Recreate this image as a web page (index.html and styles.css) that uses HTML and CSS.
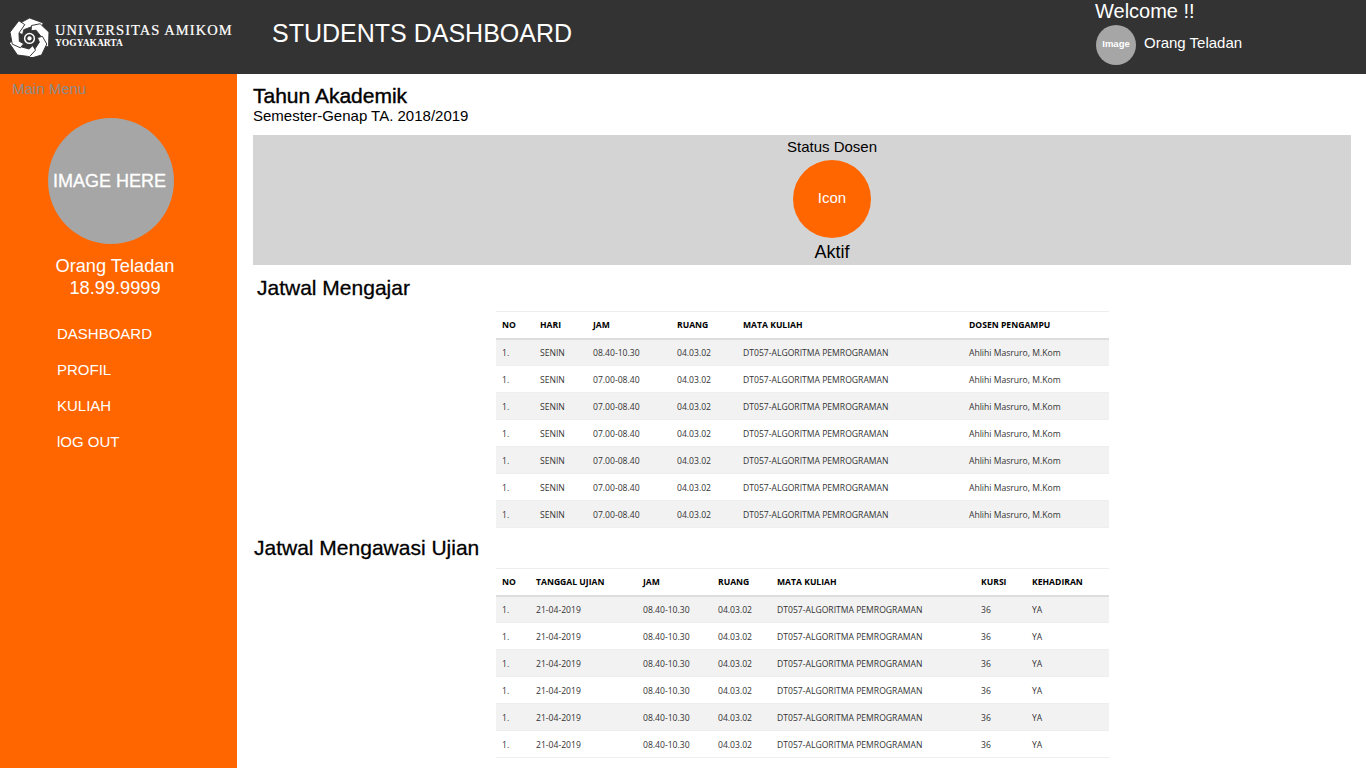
FILE: index.html
```html
<!DOCTYPE html>
<html lang="en">
<head>
    <meta charset="UTF-8">
    <meta name="viewport" content="width=device-width, initial-scale=1.0">
    <title>Students Dashboard</title>
    <link rel="stylesheet" href="styles.css">
</head>
<body>
    <header class="topbar">
        <div class="logo">
            <svg class="logo-mark" viewBox="0 0 40 40" width="39" height="39">
                <g fill="#fff" stroke="#333333" stroke-width="0.9">
                    <path id="blade" d="M20 0 L34 5 L32 12 L22 9 L14 12 L13 17 L8 15 L9 6 Z"/>
                    <use href="#blade" transform="rotate(72 20 21)"/>
                    <use href="#blade" transform="rotate(144 20 21)"/>
                    <use href="#blade" transform="rotate(216 20 21)"/>
                    <use href="#blade" transform="rotate(288 20 21)"/>
                </g>
                <circle cx="20" cy="21" r="5" fill="#333333" stroke="#fff" stroke-width="1.5"/>
                <circle cx="20" cy="21" r="2.2" fill="#fff"/>
            </svg>
            <div class="logo-text">
                <div class="logo-name">UNIVERSITAS AMIKOM</div>
                <div class="logo-city">YOGYAKARTA</div>
            </div>
        </div>
        <div class="app-title">STUDENTS DASHBOARD</div>
        <div class="welcome">
            <div class="welcome-text">Welcome !!</div>
            <div class="welcome-user">
                <div class="avatar-small">Image</div>
                <span class="welcome-name">Orang Teladan</span>
            </div>
        </div>
    </header>

    <div class="page">
        <aside class="sidebar">
            <div class="menu-label">Main Menu</div>
            <div class="avatar-big">IMAGE HERE</div>
            <div class="user-name">Orang Teladan</div>
            <div class="user-id">18.99.9999</div>
            <ul class="side-nav">
                <li><a href="#">DASHBOARD</a></li>
                <li><a href="#">PROFIL</a></li>
                <li><a href="#">KULIAH</a></li>
                <li><a href="#">lOG OUT</a></li>
            </ul>
        </aside>

        <main class="content">
            <h1 class="year-title">Tahun Akademik</h1>
            <p class="semester">Semester-Genap TA. 2018/2019</p>

            <section class="status">
                <div class="status-label">Status Dosen</div>
                <div class="status-icon">Icon</div>
                <div class="status-value">Aktif</div>
            </section>

            <h2 class="section-title teach-title">Jatwal Mengajar</h2>
            <table class="data-table teach-table">
                <thead>
                    <tr><th>NO</th><th>HARI</th><th>JAM</th><th>RUANG</th><th>MATA KULIAH</th><th>DOSEN PENGAMPU</th></tr>
                </thead>
                <tbody>
                    <tr><td>1.</td><td>SENIN</td><td>08.40-10.30</td><td>04.03.02</td><td>DT057-ALGORITMA PEMROGRAMAN</td><td>Ahlihi Masruro, M.Kom</td></tr>
                    <tr><td>1.</td><td>SENIN</td><td>07.00-08.40</td><td>04.03.02</td><td>DT057-ALGORITMA PEMROGRAMAN</td><td>Ahlihi Masruro, M.Kom</td></tr>
                    <tr><td>1.</td><td>SENIN</td><td>07.00-08.40</td><td>04.03.02</td><td>DT057-ALGORITMA PEMROGRAMAN</td><td>Ahlihi Masruro, M.Kom</td></tr>
                    <tr><td>1.</td><td>SENIN</td><td>07.00-08.40</td><td>04.03.02</td><td>DT057-ALGORITMA PEMROGRAMAN</td><td>Ahlihi Masruro, M.Kom</td></tr>
                    <tr><td>1.</td><td>SENIN</td><td>07.00-08.40</td><td>04.03.02</td><td>DT057-ALGORITMA PEMROGRAMAN</td><td>Ahlihi Masruro, M.Kom</td></tr>
                    <tr><td>1.</td><td>SENIN</td><td>07.00-08.40</td><td>04.03.02</td><td>DT057-ALGORITMA PEMROGRAMAN</td><td>Ahlihi Masruro, M.Kom</td></tr>
                    <tr><td>1.</td><td>SENIN</td><td>07.00-08.40</td><td>04.03.02</td><td>DT057-ALGORITMA PEMROGRAMAN</td><td>Ahlihi Masruro, M.Kom</td></tr>
                </tbody>
            </table>

            <h2 class="section-title exam-title">Jatwal Mengawasi Ujian</h2>
            <table class="data-table exam-table">
                <thead>
                    <tr><th>NO</th><th>TANGGAL UJIAN</th><th>JAM</th><th>RUANG</th><th>MATA KULIAH</th><th>KURSI</th><th>KEHADIRAN</th></tr>
                </thead>
                <tbody>
                    <tr><td>1.</td><td>21-04-2019</td><td>08.40-10.30</td><td>04.03.02</td><td>DT057-ALGORITMA PEMROGRAMAN</td><td>36</td><td>YA</td></tr>
                    <tr><td>1.</td><td>21-04-2019</td><td>08.40-10.30</td><td>04.03.02</td><td>DT057-ALGORITMA PEMROGRAMAN</td><td>36</td><td>YA</td></tr>
                    <tr><td>1.</td><td>21-04-2019</td><td>08.40-10.30</td><td>04.03.02</td><td>DT057-ALGORITMA PEMROGRAMAN</td><td>36</td><td>YA</td></tr>
                    <tr><td>1.</td><td>21-04-2019</td><td>08.40-10.30</td><td>04.03.02</td><td>DT057-ALGORITMA PEMROGRAMAN</td><td>36</td><td>YA</td></tr>
                    <tr><td>1.</td><td>21-04-2019</td><td>08.40-10.30</td><td>04.03.02</td><td>DT057-ALGORITMA PEMROGRAMAN</td><td>36</td><td>YA</td></tr>
                    <tr><td>1.</td><td>21-04-2019</td><td>08.40-10.30</td><td>04.03.02</td><td>DT057-ALGORITMA PEMROGRAMAN</td><td>36</td><td>YA</td></tr>
                </tbody>
            </table>
        </main>
    </div>
</body>
</html>
```

FILE: styles.css
```css
html, body {
    height: 768px;
    overflow: hidden;
}

body {
    font-family: "Liberation Sans", Arial, sans-serif;
    margin: 0;
    padding: 0;
    background-color: white;
    color: black;
}

.topbar {
    display: flex;
    height: 74px;
    background-color: #333333;
    color: white;
}

.logo {
    display: flex;
    align-items: center;
    width: 272px;
    padding-left: 10px;
    box-sizing: border-box;
}

.logo-mark {
    flex: 0 0 auto;
}

.logo-text {
    margin-left: 6px;
    margin-bottom: 3px;
    font-family: "Liberation Serif", serif;
}

.logo-name {
    font-size: 14.5px;
    line-height: 15px;
    letter-spacing: 1.05px;
    white-space: nowrap;
    -webkit-text-stroke: 0.2px white;
}

.logo-city {
    font-size: 9.5px;
    line-height: 10px;
    font-weight: bold;
}

.app-title {
    font-size: 25px;
    line-height: 66px;
    flex: 1;
}

.welcome {
    width: 271px;
}

.welcome-text {
    font-size: 20px;
    line-height: 23px;
}

.welcome-user {
    display: flex;
    align-items: center;
    margin-top: 2px;
    margin-left: 1px;
    font-size: 15px;
}

.welcome-name {
    margin-bottom: 6px;
}

.avatar-small {
    width: 40px;
    height: 40px;
    line-height: 38px;
    margin-right: 8px;
    border-radius: 50%;
    background-color: #a6a6a6;
    text-align: center;
    font-size: 9.5px;
    font-weight: bold;
}

.page {
    display: flex;
    height: 694px;
}

.sidebar {
    width: 237px;
    flex: 0 0 auto;
    background-color: #ff6600;
    color: white;
    text-align: center;
}

.menu-label {
    padding: 7px 0 0 12px;
    height: 44px;
    box-sizing: border-box;
    text-align: left;
    font-size: 15px;
    line-height: 16px;
    color: #8c8c8c;
}

.avatar-big {
    width: 126px;
    height: 126px;
    line-height: 126px;
    margin: 0 0 11px 48px;
    border-radius: 50%;
    background-color: #a6a6a6;
    font-size: 18px;
    white-space: nowrap;
    -webkit-text-stroke: 0.3px white;
    text-indent: -3px;
}

.user-name, .user-id {
    width: 230px;
    font-size: 18.2px;
    line-height: 22px;
}

.side-nav {
    list-style: none;
    margin: 25px 0 0;
    padding: 0 0 0 57px;
    text-align: left;
}

.side-nav li {
    height: 36px;
    font-size: 15px;
    line-height: 20px;
}

.side-nav a {
    color: white;
    text-decoration: none;
}

.content {
    flex: 1;
    padding: 11px 15px 0 16px;
    min-width: 0;
}

.year-title {
    margin: 0;
    font-size: 21px;
    line-height: 22px;
    font-weight: normal;
    -webkit-text-stroke: 0.4px black;
}

.semester {
    margin: 0 0 11px;
    font-size: 15px;
    line-height: 17px;
}

.status {
    height: 130px;
    padding: 3px 0 0 60px;
    background-color: #d5d4d5;
    text-align: center;
    box-sizing: border-box;
}

.status-label {
    font-size: 15px;
    line-height: 17px;
}

.status-icon {
    width: 78px;
    height: 78px;
    line-height: 76px;
    margin: 5px auto 3px;
    border-radius: 50%;
    background-color: #ff6600;
    color: white;
    font-size: 15px;
}

.status-value {
    font-size: 18px;
    line-height: 22px;
}

.section-title {
    margin: 0;
    font-size: 21px;
    line-height: 24px;
    font-weight: normal;
    -webkit-text-stroke: 0.3px black;
}

.teach-title {
    padding: 11px 0 0 4px;
    height: 46px;
    box-sizing: border-box;
}

.exam-title {
    padding: 8px 0 0 1px;
    height: 40px;
    box-sizing: border-box;
}

.data-table {
    width: 613px;
    margin-left: 243px;
    border-collapse: collapse;
    table-layout: fixed;
    font-family: "Open Sans", sans-serif;
    font-size: 8.6px;
    color: #333333;
    text-align: left;
}

.data-table th {
    height: 27px;
    padding: 0 6px;
    border-top: 1px solid #eeeeee;
    border-bottom: 2px solid #dddddd;
    box-sizing: border-box;
    color: black;
    font-weight: bold;
}

.data-table td {
    height: 27px;
    padding: 2px 6px 0;
    border-bottom: 1px solid #eeeeee;
    box-sizing: border-box;
    white-space: nowrap;
}

.data-table tbody tr:nth-child(odd) {
    background-color: #f2f2f2;
}

.teach-table th:nth-child(1) { width: 38px; }
.teach-table th:nth-child(2) { width: 53px; }
.teach-table th:nth-child(3) { width: 84px; }
.teach-table th:nth-child(4) { width: 66px; }
.teach-table th:nth-child(5) { width: 226px; }

.exam-table th:nth-child(1) { width: 34px; }
.exam-table th:nth-child(2) { width: 107px; }
.exam-table th:nth-child(3) { width: 75px; }
.exam-table th:nth-child(4) { width: 59px; }
.exam-table th:nth-child(5) { width: 204px; }
.exam-table th:nth-child(6) { width: 51px; }
```
